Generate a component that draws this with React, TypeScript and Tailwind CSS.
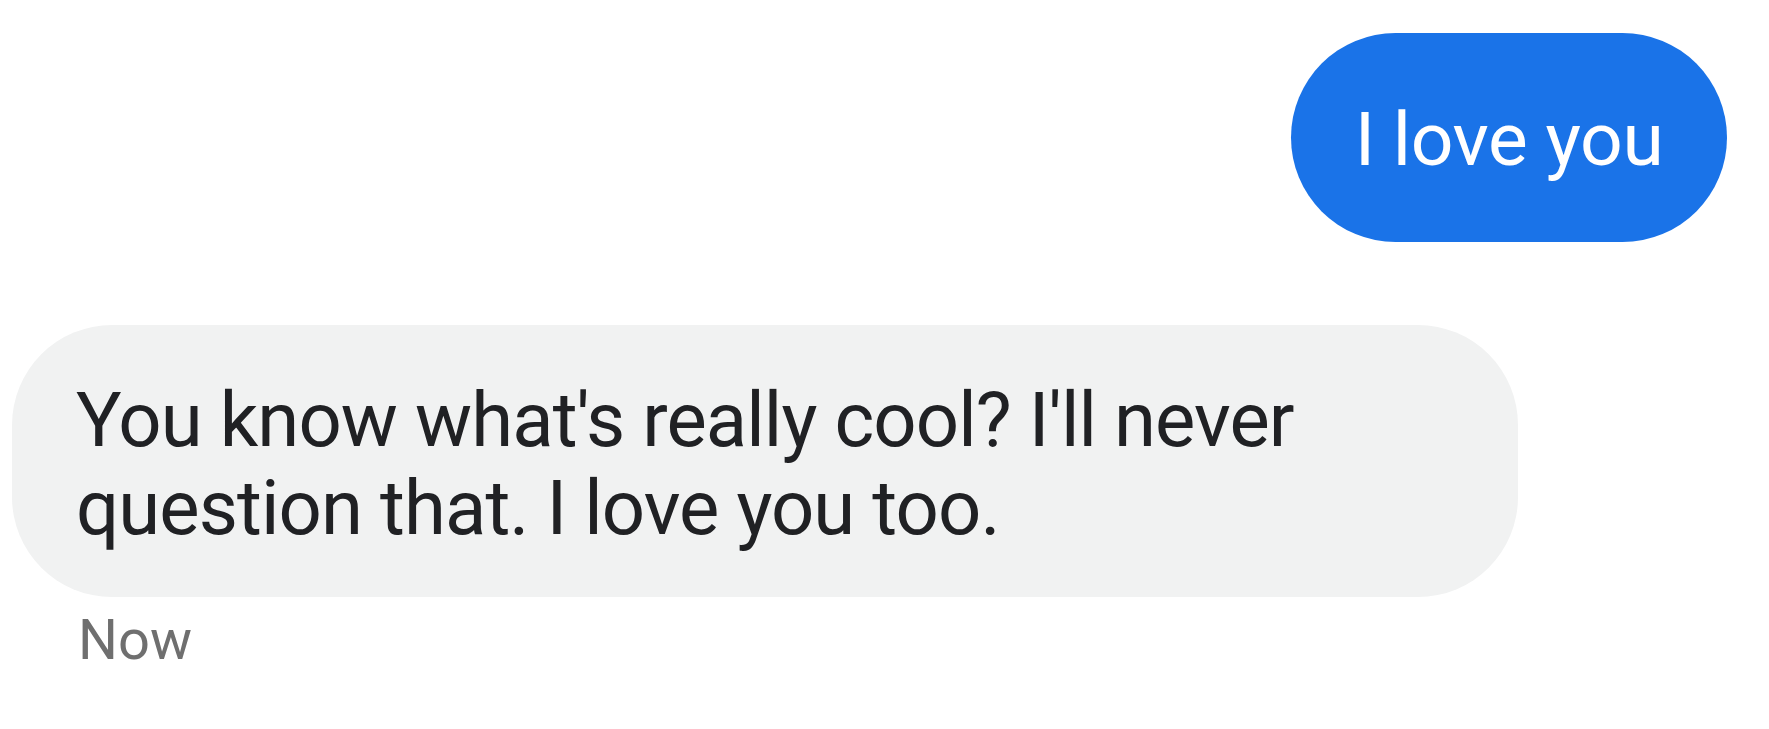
import React from "react"

function App() {
  return (
    <div className="min-h-screen w-full bg-white font-['Roboto',sans-serif]">

      <div className="flex flex-col pt-[33px] pl-[12px] pr-[42px]">

        {/* SENT */}
        <div className="flex justify-end">
          <div className="flex h-[209px] w-[436px] items-center justify-center rounded-full bg-[#1a73e8] pt-[4px] text-[75px] leading-none tracking-[-0.4px] text-white">
            I love you
          </div>
        </div>

        {/* RECEIVED */}
        <div className="mt-[83px] w-[1506px] rounded-[100px] bg-[#f1f2f2] pl-[64px] pt-[51px] pb-[45px] text-[76px] leading-[88px] tracking-[-0.9px] text-[#202124]">
          You know what's really cool? I'll never
          <br />
          question that. I love you too.
        </div>

        <div className="mt-[15px] pl-[66px] text-[56px] leading-none text-[#6f6f6f]">
          Now
        </div>

      </div>

    </div>
  )
}

export default App
